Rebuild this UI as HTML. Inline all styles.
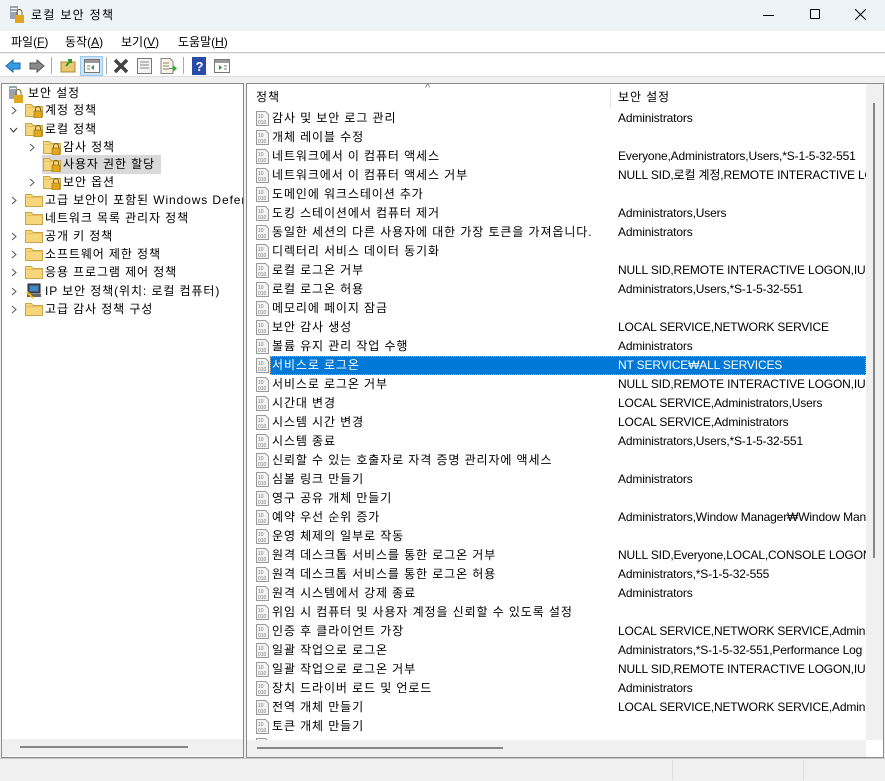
<!DOCTYPE html>
<html><head><meta charset="utf-8">
<style>
*{margin:0;padding:0;box-sizing:border-box}
body{width:885px;height:781px;overflow:hidden;background:#f0f0f0;font-family:"Liberation Sans","Noto Sans CJK KR",sans-serif;font-size:12px;color:#000;position:relative}
.abs{position:absolute}
#title{left:0;top:0;width:885px;height:31px;background:#eef3f8}
#menu{left:0;top:31px;width:885px;height:22px;background:#fff;border-bottom:1px solid #c8c8c8}
#tool{left:0;top:54px;width:885px;height:23px;background:#fff;border-bottom:1px solid #dcdcdc}
#left{left:1px;top:83px;width:243px;height:675px;background:#fff;border:1px solid #8a8a8a;overflow:hidden}
#right{left:246px;top:83px;width:638px;height:675px;background:#fff;border:1px solid #8a8a8a;overflow:hidden}
.t{position:absolute;white-space:nowrap;line-height:18px;height:18px}
.k{letter-spacing:0.9px}
.row{position:absolute;left:0;height:19px;width:620px;white-space:nowrap;line-height:19px}
.row .n{position:absolute;left:25px;letter-spacing:0.9px}
.row .v{position:absolute;left:371px;width:248px;overflow:hidden;letter-spacing:-0.15px}
.row svg{position:absolute;left:9px;top:2px}
.sel{background:#0078d7;color:#fff}
</style></head><body>
<div id="title" class="abs">
 <svg class="abs" style="left:9px;top:6px" width="16" height="18"><rect x="1" y="0" width="8" height="13" fill="#9aa4ae"/><rect x="2" y="2" width="6" height="1" fill="#fff"/><rect x="2" y="5" width="6" height="1" fill="#fff"/><rect x="6" y="9" width="9" height="8" fill="#e0a820"/><path d="M8 9V6a2.5 2.5 0 0 1 5 0v3" stroke="#7a6020" fill="none"/></svg>
 <span class="t k" style="left:31px;top:6px;font-size:12px;letter-spacing:1.3px">로컬 보안 정책</span>
 <div class="abs" style="left:763px;top:15px;width:11px;height:1px;background:#000"></div>
 <div class="abs" style="left:810px;top:9px;width:10px;height:10px;border:1px solid #000;border-radius:1px"></div>
 <svg class="abs" style="left:855px;top:9px" width="11" height="11"><path d="M0 0L11 11M11 0L0 11" stroke="#000"/></svg>
</div>
<div id="menu" class="abs">
 <span class="t" style="left:11px;top:2px">파일(<u>F</u>)</span>
 <span class="t" style="left:65px;top:2px">동작(<u>A</u>)</span>
 <span class="t" style="left:121px;top:2px">보기(<u>V</u>)</span>
 <span class="t" style="left:178px;top:2px">도움말(<u>H</u>)</span>
</div>
<div id="tool" class="abs">
 <svg class="abs" style="left:5px;top:4px" width="40" height="16"><path d="M1 8L8 2V5H15V11H8V14Z" fill="#3a9ae0" stroke="#1a6ab0"/><path d="M39 8L32 2V5H25V11H32V14Z" fill="#8a8a8a" stroke="#555"/></svg>
 <div class="abs" style="left:51px;top:3px;width:1px;height:17px;background:#aaa"></div>
 <svg class="abs" style="left:60px;top:3px" width="16" height="16"><rect x="1" y="5" width="14" height="10" fill="#e8c870" stroke="#b08a30"/><path d="M6 9L11 3M8 3h3v3" stroke="#2a9a2a" stroke-width="2" fill="none"/></svg>
 <div class="abs" style="left:80px;top:2px;width:23px;height:20px;background:#cce4f7;border:1px solid #99c9ef"></div>
 <svg class="abs" style="left:84px;top:5px" width="16" height="14"><rect x="0.5" y="0.5" width="15" height="13" fill="#fff" stroke="#777"/><rect x="1" y="1" width="14" height="3" fill="#999"/><path d="M10 6v5l-3-2.5z" fill="#2a9a2a"/><path d="M3 7h3M3 10h3" stroke="#777"/></svg>
 <div class="abs" style="left:106px;top:3px;width:1px;height:17px;background:#aaa"></div>
 <svg class="abs" style="left:113px;top:4px" width="16" height="16"><path d="M2 2L14 14M14 2L2 14" stroke="#444" stroke-width="3.5"/></svg>
 <svg class="abs" style="left:137px;top:4px" width="15" height="16"><rect x="0.5" y="0.5" width="14" height="15" fill="#f4f4f4" stroke="#777"/><path d="M3 4h9M3 7h9M3 10h9" stroke="#888"/></svg>
 <svg class="abs" style="left:160px;top:4px" width="17" height="16"><path d="M1 .5h9l3 3V15.5H1z" fill="#f8f4e0" stroke="#888"/><path d="M3 5h6M3 8h6M3 11h6" stroke="#888"/><path d="M9 10h4V7l4 3.5-4 3.5v-3H9z" fill="#3aaa3a"/></svg>
 <div class="abs" style="left:183px;top:3px;width:1px;height:17px;background:#aaa"></div>
 <svg class="abs" style="left:192px;top:3px" width="14" height="18"><rect width="14" height="18" fill="#2a4aa8"/><text x="3.5" y="14" fill="#fff" font-size="13" font-family="Liberation Sans" font-weight="bold">?</text></svg>
 <svg class="abs" style="left:214px;top:5px" width="16" height="14"><rect x="0.5" y="0.5" width="15" height="13" fill="#fff" stroke="#777"/><rect x="1" y="1" width="14" height="3" fill="#999"/><path d="M5 6v5l3-2.5z" fill="#2a9a2a"/><path d="M10 7h3M10 10h3" stroke="#777"/></svg>
</div>

<div id="left" class="abs">
 <div class="abs" style="left:40px;top:71px;width:119px;height:19px;background:#d9d9d9"></div>
 <svg class="abs" style="left:6px;top:2px" width="16" height="18"><rect x="1" y="0" width="8" height="13" fill="#9aa4ae"/><rect x="2" y="2" width="6" height="1" fill="#fff"/><rect x="6" y="9" width="9" height="8" fill="#e0a820"/><path d="M8 9V6a2.5 2.5 0 0 1 5 0v3" stroke="#7a6020" fill="none"/></svg>
 <span class="t k" style="left:26px;top:0px">보안 설정</span>
</div>

<div id="right" class="abs">
 <span class="t k" style="left:9px;top:4px">정책</span>
 <span class="t" style="left:178px;top:-5px;color:#777;font-size:11px">^</span>
 <div class="abs" style="left:363px;top:4px;width:1px;height:20px;background:#e0e0e0"></div>
 <span class="t k" style="left:371px;top:4px">보안 설정</span>
 <div id="rows" class="abs" style="left:0;top:25px;width:619px;height:631px;overflow:hidden"></div>
 <div class="abs" style="left:619px;top:0;width:17px;height:656px;background:#f0f0f0"></div>
 <div class="abs" style="left:626px;top:19px;width:2px;height:455px;background:#868686"></div>
 <div class="abs" style="left:0;top:656px;width:619px;height:17px;background:#f0f0f0"></div>
 <div class="abs" style="left:10px;top:663px;width:246px;height:2px;background:#868686"></div>
</div>
<div class="abs" style="left:2px;top:739px;width:241px;height:17px;background:#f0f0f0"></div>
<div class="abs" style="left:20px;top:746px;width:168px;height:2px;background:#868686"></div>

<div class="abs" style="left:0;top:758px;width:885px;height:23px;background:#f0f0f0;border-top:1px solid #c8c8c8"></div>
<div class="abs" style="left:672px;top:760px;width:1px;height:20px;background:#ddd"></div>
<div class="abs" style="left:803px;top:760px;width:1px;height:20px;background:#ddd"></div>

<script>
var folder=function(lock){return '<svg width="18" height="16" style="position:absolute;left:0;top:1px"><path d="M.5 2.5h6l1.5 2h9.5v10H.5z" fill="#f6d67a" stroke="#c9a44a"/><path d="M.5 5.5h17" stroke="#e8c060"/>'+(lock?'<rect x="9" y="9" width="8" height="7" fill="#e0a820" stroke="#8a6a10" stroke-width=".6"/><path d="M10.5 9V7a2.5 2.5 0 0 1 5 0v2" stroke="#7a6020" fill="none"/>':'')+'</svg>';};
var tree=[[110,11,23,'계정 정책','>',1],[129,11,23,'로컬 정책','v',1],[147,29,41,'감사 정책','>',1],[164,0,41,'사용자 권한 할당','',1],[182,29,41,'보안 옵션','>',1],[200,11,23,'고급 보안이 포함된 Windows Defender','>',0],[218,0,23,'네트워크 목록 관리자 정책','',0],[236,11,23,'공개 키 정책','>',0],[254,11,23,'소프트웨어 제한 정책','>',0],[272,11,23,'응용 프로그램 제어 정책','>',0],[291,11,23,'IP 보안 정책(위치: 로컬 컴퓨터)','>',2],[309,11,23,'고급 감사 정책 구성','>',0]];
var L=document.getElementById('left'),h='';
tree.forEach(function(t){var top=t[0]-84-9;
 if(t[4]=='>')h+='<svg class="abs" style="left:'+(t[1]-2)+'px;top:'+(top+5)+'px" width="6" height="9"><path d="M1 1l4 3.5L1 8" stroke="#555" fill="none"/></svg>';
 if(t[4]=='v')h+='<svg class="abs" style="left:'+(t[1]-4)+'px;top:'+(top+7)+'px" width="9" height="6"><path d="M1 1l3.5 4L8 1" stroke="#333" fill="none"/></svg>';
 var ic=t[5]==2?'<svg width="18" height="16" style="position:absolute;left:0;top:1px"><rect x="3" y="1" width="12" height="9" fill="#4a5a6a" stroke="#222"/><rect x="5" y="3" width="8" height="5" fill="#3a8ad0"/><rect x="2" y="11" width="14" height="3" fill="#666"/><path d="M2 9l6 6" stroke="#f0c000" stroke-width="2"/></svg>':folder(t[5]);
 h+='<div class="abs" style="left:'+t[2]+'px;top:'+top+'px;width:240px;height:18px">'+ic+'<span class="t k" style="left:20px;top:0">'+t[3]+'</span></div>';});
L.innerHTML+=h;
var R=[['감사 및 보안 로그 관리','Administrators'],['개체 레이블 수정',''],['네트워크에서 이 컴퓨터 액세스','Everyone,Administrators,Users,*S-1-5-32-551'],['네트워크에서 이 컴퓨터 액세스 거부','NULL SID,로컬 계정,REMOTE INTERACTIVE LOGON'],['도메인에 워크스테이션 추가',''],['도킹 스테이션에서 컴퓨터 제거','Administrators,Users'],['동일한 세션의 다른 사용자에 대한 가장 토큰을 가져옵니다.','Administrators'],['디렉터리 서비스 데이터 동기화',''],['로컬 로그온 거부','NULL SID,REMOTE INTERACTIVE LOGON,IUSR,'],['로컬 로그온 허용','Administrators,Users,*S-1-5-32-551'],['메모리에 페이지 잠금',''],['보안 감사 생성','LOCAL SERVICE,NETWORK SERVICE'],['볼륨 유지 관리 작업 수행','Administrators'],['서비스로 로그온','NT SERVICE₩ALL SERVICES'],['서비스로 로그온 거부','NULL SID,REMOTE INTERACTIVE LOGON,IUSR,'],['시간대 변경','LOCAL SERVICE,Administrators,Users'],['시스템 시간 변경','LOCAL SERVICE,Administrators'],['시스템 종료','Administrators,Users,*S-1-5-32-551'],['신뢰할 수 있는 호출자로 자격 증명 관리자에 액세스',''],['심볼 링크 만들기','Administrators'],['영구 공유 개체 만들기',''],['예약 우선 순위 증가','Administrators,Window Manager₩Window Manager'],['운영 체제의 일부로 작동',''],['원격 데스크톱 서비스를 통한 로그온 거부','NULL SID,Everyone,LOCAL,CONSOLE LOGON,'],['원격 데스크톱 서비스를 통한 로그온 허용','Administrators,*S-1-5-32-555'],['원격 시스템에서 강제 종료','Administrators'],['위임 시 컴퓨터 및 사용자 계정을 신뢰할 수 있도록 설정',''],['인증 후 클라이언트 가장','LOCAL SERVICE,NETWORK SERVICE,Administrators'],['일괄 작업으로 로그온','Administrators,*S-1-5-32-551,Performance Log'],['일괄 작업으로 로그온 거부','NULL SID,REMOTE INTERACTIVE LOGON,IUSR,'],['장치 드라이버 로드 및 언로드','Administrators'],['전역 개체 만들기','LOCAL SERVICE,NETWORK SERVICE,Administrators'],['토큰 개체 만들기',''],['',''] ];
var icon='<svg width="13" height="15"><path d="M.5 .5h9l3 3v11h-12z" fill="#f4f4f4" stroke="#999"/><text x="2" y="7" font-size="5" fill="#777" font-family="Liberation Sans">10</text><text x="2" y="13" font-size="5" fill="#777" font-family="Liberation Sans">010</text></svg>';
var o='';
R.forEach(function(r,i){var s=i==13;
 o+='<div class="row" style="top:'+(i*19)+'px">'+(s?'<div class="abs sel" style="left:23px;top:0;width:596px;height:19px;outline:1px dotted #f0a040;outline-offset:-1px"></div>':'')+icon+'<span class="n" style="'+(s?'color:#fff':'')+'">'+r[0]+'</span><span class="v" style="'+(s?'color:#fff':'')+'">'+r[1]+'</span></div>';});
document.getElementById('rows').innerHTML=o;
</script>
</body></html>
